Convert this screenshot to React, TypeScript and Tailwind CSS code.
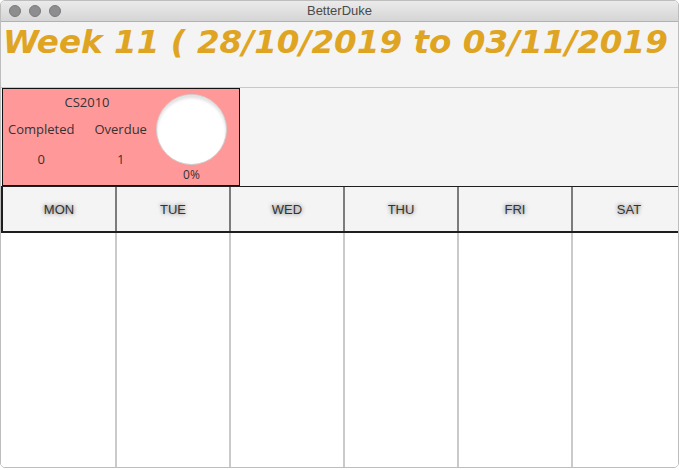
import React from "react";

const days = ["MON", "TUE", "WED", "THU", "FRI", "SAT", "SUN"];

const TrafficLight = () => (
  <span className="w-[12px] h-[12px] rounded-full bg-[#8e8e90] border border-[#7a7a7c]" />
);

const ModuleCard = () => {
  return (
    <div className="ml-[1px] w-[238px] h-[98px] bg-[#ff9999] border border-[#111] flex text-[13px] text-[#333] font-['Open_Sans',sans-serif] leading-[16px]">
      <div className="flex flex-col pl-[5px] pt-[5px] w-[153px]">
        <div className="pl-[10px] text-center">CS2010</div>
        <div className="flex gap-[20px] mt-[11px]">
          <div className="flex flex-col items-center">
            <span>Completed</span>
            <span className="mt-[14px]">0</span>
          </div>
          <div className="flex flex-col items-center">
            <span>Overdue</span>
            <span className="mt-[14px]">1</span>
          </div>
        </div>
      </div>
      <div className="flex flex-col items-center pt-[5px]">
        <div className="w-[71px] h-[71px] rounded-full bg-white border border-[#cfcfcf] shadow-[inset_0_3px_3px_rgba(0,0,0,0.12)]" />
        <span className="mt-[2px] text-[12px]">0%</span>
      </div>
    </div>
  );
};

export default function App() {
  return (
    <div className="w-[679px] h-[470px] bg-white overflow-hidden">
      <div className="w-[679px] h-[468px] flex flex-col rounded-[5px] border border-[#bdbdbd] overflow-hidden bg-[#f4f4f4]">
        {/* title bar */}
        <div className="relative h-[21px] shrink-0 flex items-center gap-[8px] pl-[8px] bg-gradient-to-b from-[#ebebeb] to-[#d5d5d5] border-b border-[#b1b1b1]">
          <TrafficLight />
          <TrafficLight />
          <TrafficLight />
          <span className="absolute left-0 right-0 text-center text-[13px] text-[#4a4a4a] font-['Liberation_Sans',sans-serif]">
            BetterDuke
          </span>
        </div>

        {/* week heading */}
        <div className="h-[66px] shrink-0 border-b border-[#c8c8c8] pt-[4px] pl-[2px] overflow-hidden">
          <h1 className="whitespace-nowrap text-[32.6px] leading-[32px] font-bold italic text-[#dfa522] font-['DejaVu_Sans',sans-serif]">
            Week 11 ( 28/10/2019 to 03/11/2019 )
          </h1>
        </div>

        <div className="shrink-0">
          <ModuleCard />
        </div>

        {/* day headers */}
        <div className="flex shrink-0 h-[47px] border-t border-b-2 border-[#1e1e1e] border-l-2 overflow-hidden">
          {days.map((d) => (
            <div
              key={d}
              className="w-[114px] shrink-0 h-full flex items-center justify-center pt-[1px] border-r-2 border-[#7c7c7c] text-[13px] text-[#333] font-['Liberation_Sans',sans-serif] [text-shadow:0_0_4px_rgba(0,0,0,0.6)]"
            >
              {d}
            </div>
          ))}
        </div>

        {/* day bodies */}
        <div className="flex flex-1 bg-white pl-[2px] overflow-hidden">
          {days.map((d) => (
            <div key={d} className="w-[114px] shrink-0 h-full border-r-2 border-[#cacaca]" />
          ))}
        </div>
      </div>
    </div>
  );
}
